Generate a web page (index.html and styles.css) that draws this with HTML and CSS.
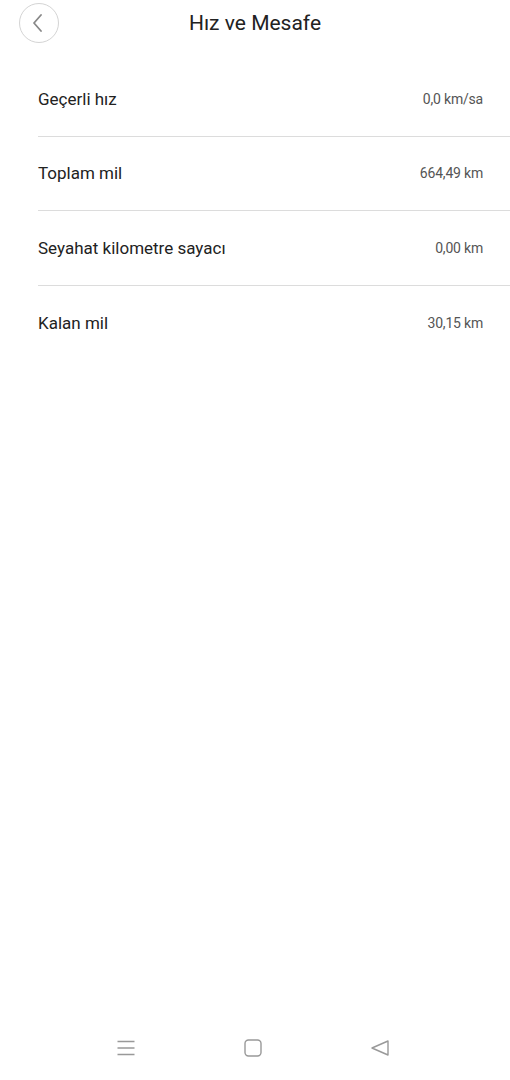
FILE: index.html
```html
<!DOCTYPE html>
<html lang="tr">
<head>
    <meta charset="UTF-8">
    <title>Hız ve Mesafe</title>
    <link rel="stylesheet" href="styles.css">
</head>
<body>
<div class="page">
    <div class="header">
        <div class="back">
            <svg width="14" height="18" viewBox="0 0 14 18">
                <path d="M10 1 L3 9 L10 17" fill="none" stroke="#888" stroke-width="1.8" stroke-linecap="round" stroke-linejoin="round"/>
            </svg>
        </div>
        <h1 class="title">Hız ve Mesafe</h1>
    </div>
    <ul class="list">
        <li><span class="label">Geçerli hız</span><span class="value">0,0 km/sa</span></li>
        <li><span class="label">Toplam mil</span><span class="value">664,49 km</span></li>
        <li><span class="label">Seyahat kilometre sayacı</span><span class="value">0,00 km</span></li>
        <li><span class="label">Kalan mil</span><span class="value">30,15 km</span></li>
    </ul>
    <div class="navbar">
        <svg width="20" height="20" viewBox="0 0 20 20">
            <path d="M1.5 3.5 H18.5 M1.5 10 H18.5 M1.5 16.5 H18.5" stroke="#999" stroke-width="1.4" fill="none"/>
        </svg>
        <svg width="20" height="20" viewBox="0 0 20 20">
            <rect x="2" y="2" width="16" height="16" rx="3.5" stroke="#999" stroke-width="1.4" fill="none"/>
        </svg>
        <svg width="20" height="20" viewBox="0 0 20 20">
            <path d="M2 10 L18 3 V17 Z" stroke="#999" stroke-width="1.4" stroke-linejoin="round" fill="none"/>
        </svg>
    </div>
</div>
</body>
</html>
```

FILE: styles.css
```css
*{
    margin: 0;
    padding: 0;
    box-sizing: border-box;
}
body{
    background: #fff;
    font-family: Roboto, "Noto Sans", sans-serif;
    color: #222;
}
.page{
    width: 510px;
    height: 1080px;
    display: flex;
    flex-direction: column;
}
.header{
    height: 46px;
    display: flex;
    align-items: center;
    position: relative;
    padding-left: 19px;
}
.back{
    width: 40px;
    height: 40px;
    border: 1px solid #d4d4d4;
    border-radius: 50%;
    display: flex;
    align-items: center;
    justify-content: center;
    padding-right: 3px;
}
.title{
    position: absolute;
    left: 0;
    right: 0;
    text-align: center;
    font-size: 21px;
    font-weight: 400;
    color: #222;
    pointer-events: none;
}
.list{
    list-style: none;
    margin-top: 16px;
    padding-left: 38px;
}
.list li{
    height: 74.5px;
    display: flex;
    align-items: center;
    justify-content: space-between;
    padding-right: 27px;
    border-bottom: 1px solid #dcdcdc;
}
.list li:last-child{
    border-bottom: none;
}
.label{
    font-size: 17px;
    color: #222;
}
.value{
    font-size: 14px;
    letter-spacing: -0.2px;
    color: #555;
}
.navbar{
    margin-top: auto;
    height: 64px;
    display: flex;
    align-items: center;
    gap: 107px;
    padding-left: 116px;
}
```
